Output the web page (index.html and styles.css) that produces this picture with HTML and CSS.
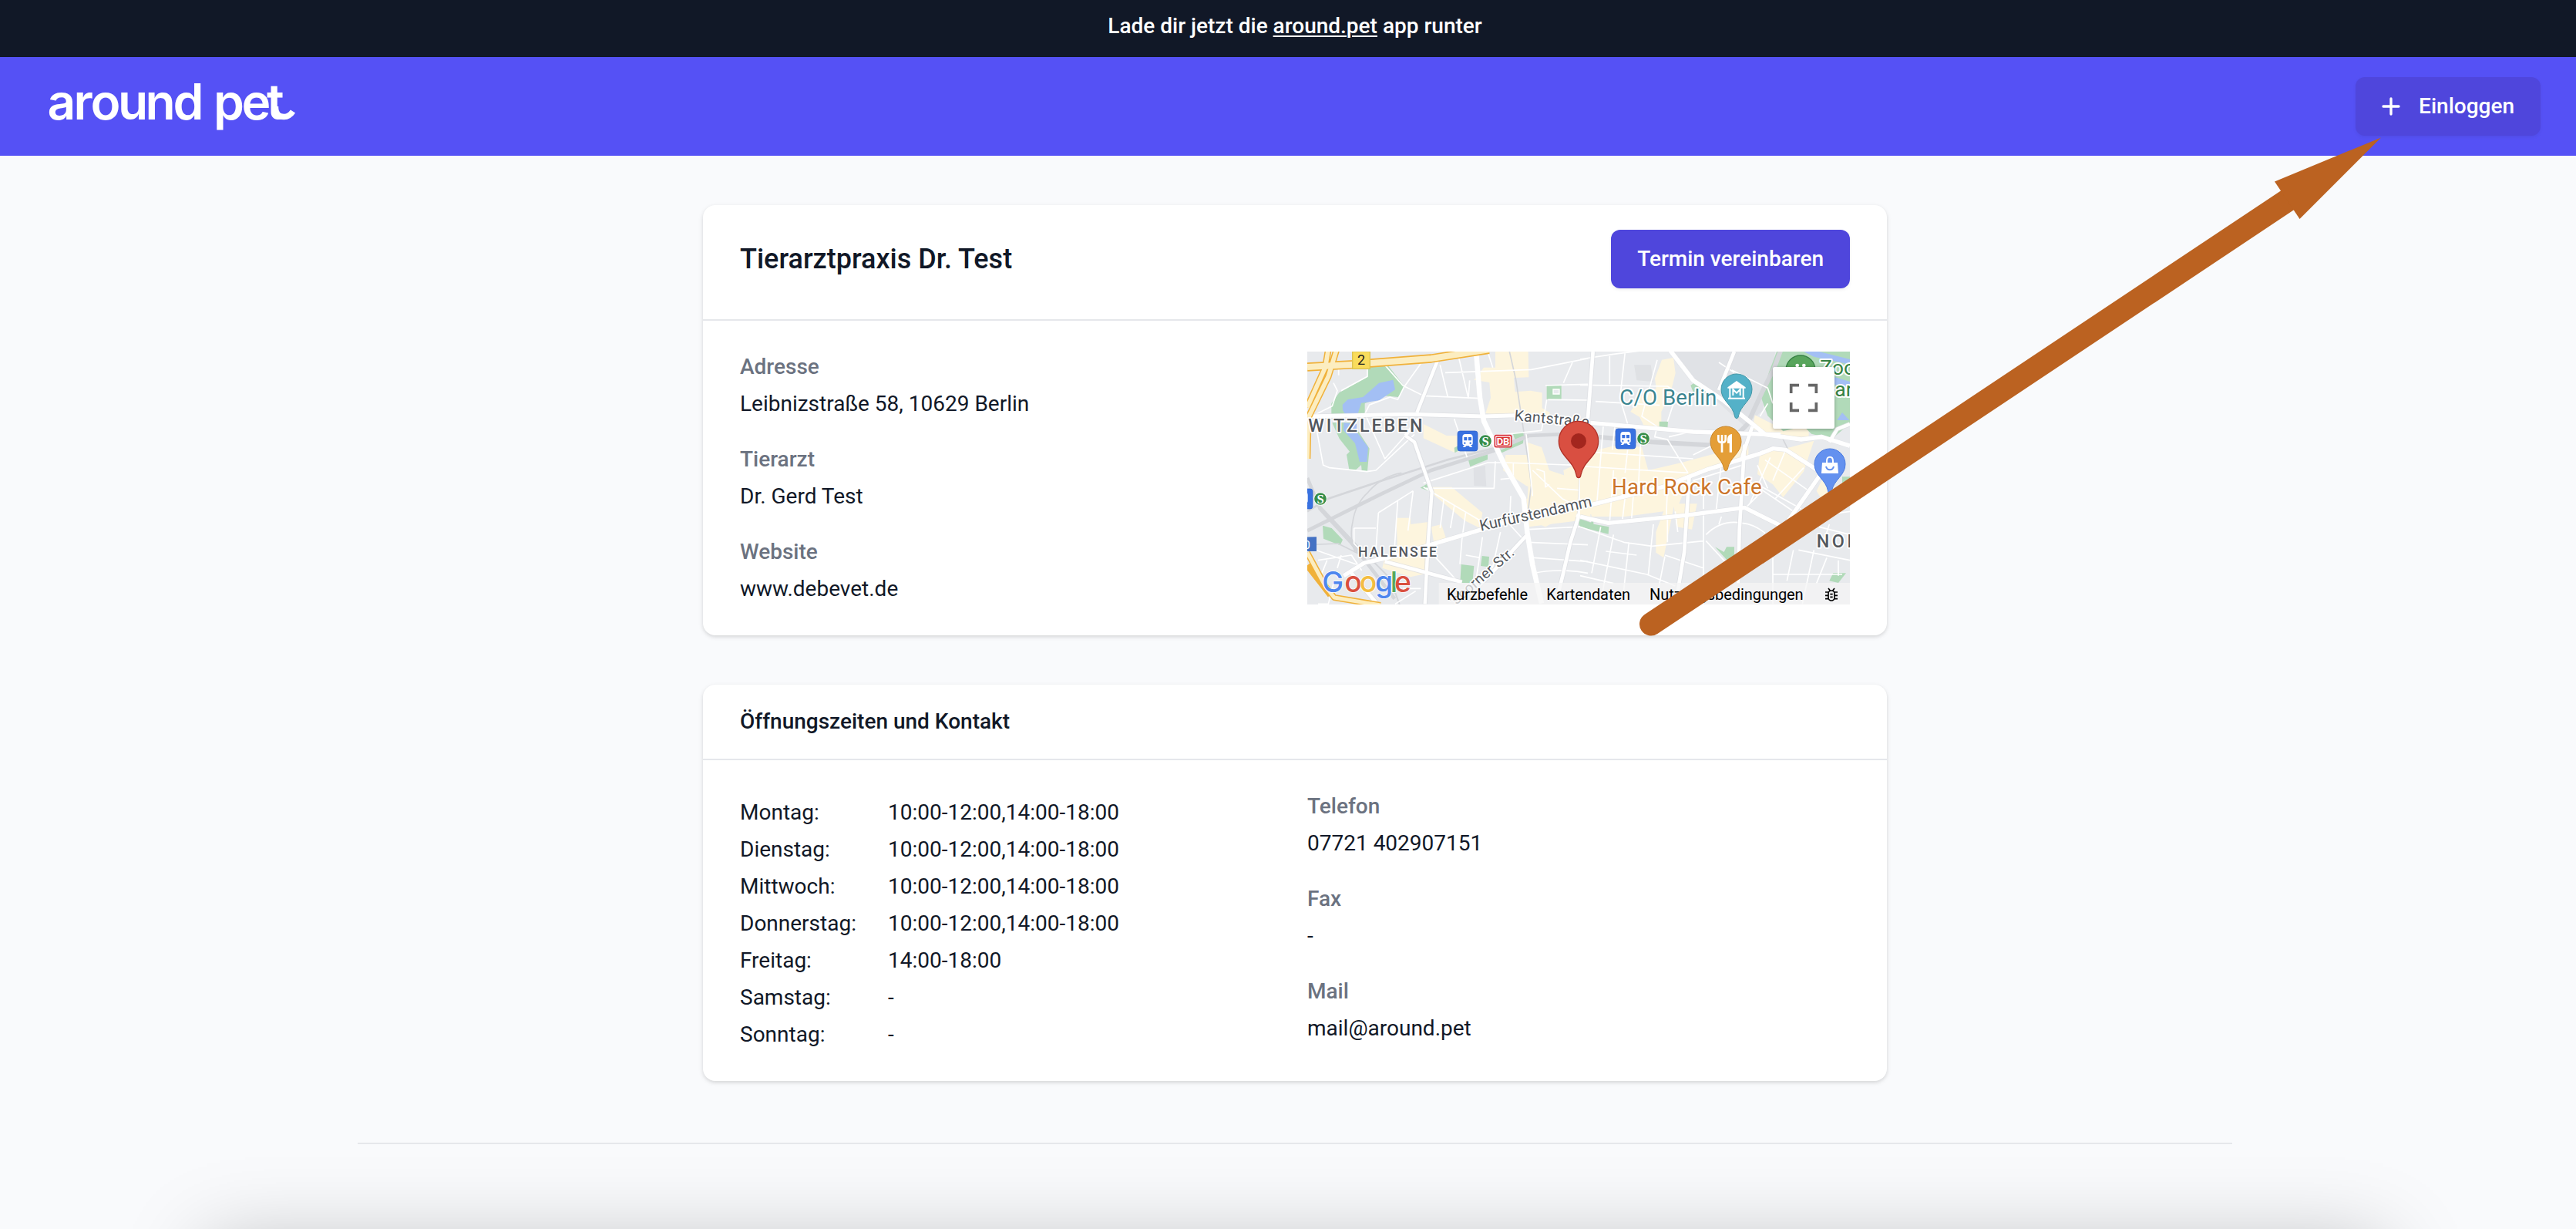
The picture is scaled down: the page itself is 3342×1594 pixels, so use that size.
FILE: index.html
```html
<!DOCTYPE html>
<html lang="de">
<head>
<meta charset="utf-8">
<title>Tierarztpraxis Dr. Test – around pet</title>
<link rel="stylesheet" href="styles.css">
</head>
<body>
<div class="page">
  <div class="banner"><p>Lade dir jetzt die <a href="#">around.pet</a> app runter</p></div>
  <header class="nav">
    <svg class="logo" viewBox="0 0 330 80" role="img" aria-label="around pet">
      <text class="logo-text" x="-2.5 31.500 53.5 89 124.5 160.5 196 213 249.5 282" y="57">around pet</text>
      <path d="M293.500 40v2c0 8 4 11.500 11 11.500 5 0 8.500-2.500 11.500-7" fill="none" stroke="#fff" stroke-width="7.500"/>
    </svg>
    <button class="btn btn-login">
      <svg class="plus" viewBox="0 0 24 24"><path d="M12 6v12M6 12h12" fill="none" stroke="#fff" stroke-width="2" stroke-linecap="round"/></svg>
      Einloggen
    </button>
  </header>

  <main class="content">
    <section class="card">
      <div class="card-head card-head-main">
        <h1>Tierarztpraxis Dr. Test</h1>
        <button class="btn">Termin vereinbaren</button>
      </div>
      <div class="card-body">
        <dl class="facts">
          <div><dt>Adresse</dt><dd>Leibnizstraße 58, 10629 Berlin</dd></div>
          <div><dt>Tierarzt</dt><dd>Dr. Gerd Test</dd></div>
          <div><dt>Website</dt><dd>www.debevet.de</dd></div>
        </dl>
        <svg class="map" viewBox="18 18 2112 984" preserveAspectRatio="none">
          <defs>
            <g id="train">
              <rect width="78" height="78" rx="10" fill="#3871e0" stroke="#2a5fc9" stroke-width="2"/>
              <path d="M30 12h18q11 0 11 12v23q0 8-8 8l7 8H48l-4-5H34l-4 5H20l7-8q-8 0-8-8V24q0-12 11-12z" fill="#fff"/>
              <path d="M25 24h12v13H25zM42 24h12v13H42z" fill="#3871e0"/>
              <circle cx="28" cy="47" r="3.500" fill="#3871e0"/><circle cx="50" cy="47" r="3.500" fill="#3871e0"/>
            </g>
            <g id="sbahn">
              <circle r="26" fill="#fff"/><circle r="23.500" fill="#388e4b"/>
              <text class="s-letter" x="0" y="17" text-anchor="middle">S</text>
            </g>
            <path id="pin" d="M0 113C-4 113-6 110-7 105-15 60-60 45-60 0A60 60 0 0 1 60 0C60 45 15 60 7 105 6 110 4 113 0 113Z"/>
          </defs>
          <rect x="18" y="18" width="2112" height="984" fill="#e8eaed"/>

          <!-- western half -->
          <g class="built">
            <path d="M705 80l45 0 0-62h128l2 100-58 2 5 55 60-5 45 8 0 60 30 18-5 20-70 4-175-22 20-60-5-60-60-10z"/>
            <path d="M470 300l90 45 45 0 30 50-45 15-120-55zM500 545h80l120 100-10 60-60-30-120-100zM365 665h55v25l75-10-5 200-70 15-110-35 10-40 50 0z"/>
            <path d="M790 420h90l-10-50 60 20 30 90 120 40-60 80-150-60-90-60zM880 500l80 40 115 90-130 70-75-30zM1015 480l100-50v200h-80z"/>
            <path d="M500 700l40-10 20 60-50 5zM870 590l250-10v90l-240 30z"/>
          </g>
          <g class="park">
            <path d="M252 65h75l70 90-25 40-55-5-75 30 0 45-130 5 0-50 30-42 110-62zM115 295h80l65 100-8 88-22-2-2-22-22 20-25-2-10-58 12-12-40-50z"/>
            <path d="M950 150h57v53h-57zM645 440l75-22 0 20-68 28zM590 392l30-15 0 20-28 15zM818 335l45-5-5 45-90 40 0-12 62-30zM458 548l25-15 10 28zM78 695l35 10 43 45-10 22-65-26zM617 846l50 6-6 66h-48zM698 813l28 3-3 40-30-4zM1072 670h60v40l-55-15z"/>
          </g>
          <path class="water" d="M155 225l20-20 60-10 62-55 55-12 8 38-62 42-70 10-15 48h-45l-12-20zM160 295l50 5 0 30 45 60-5 57h-28l-18-72-45-50z"/>
          <path d="M975 165h24v18h-24z" fill="#e8eaed" stroke="#fff" stroke-width="4"/>
          <path d="M665 470l45-8 5 80-48-2z" fill="#dfe1e5"/>
          <g class="rail">
            <path d="M18 715L300 575 500 480 740 405 880 345 1110 335" stroke-width="14"/>
            <path d="M18 640L100 590 310 520 560 440 740 395 860 350" stroke-width="8"/>
            <path d="M18 510l50 120 120 130 170 220" stroke-width="14"/>
            <path d="M40 590l170 180 130 130 40 110" stroke-width="6"/>
            <path d="M205 800q-25-60-10-120 10-70 60-115 50-60 130-75M18 770l120-5 80 40" stroke-width="5"/>
            <path d="M805 18l25 110 50 330 10 80-15 120" stroke-width="5"/>
          </g>
          <g class="street">
            <path d="M120 140l15 30-20 60-80 40M140 80l0 30M252 65V115L150 170M320 70l70 80 80 40 220 10M470 50l-75 105-25 50-30-10-80 30-20 40M245 265l75 170 80-90M45 270l35 190 25 10 145 15 35-5 150-140"/>
            <path d="M555 100l335-12 220-43M535 70l30 125M605 30l40 170M650 130l-5 70M720 18l20 62M1050 60l-35 80M945 150l165-5M955 205l155 2M950 205l-20 120-190 20M590 280l50 150M470 530l250-80 70 0 320 12M480 550h265l5-105M820 450v60l-50 5M895 480l115 110 95 50M870 340l10 90 15 150M990 550l120 10M960 535l-15 10-5-60-30-10M430 560l-20 155M370 600l-15 220M295 645l135-85M295 645l-10 150M200 705h85M200 705v60l40 40M470 545l220 130M550 590l-15 115M590 620l-15 85M635 640l-15 110-8 95"/>
            <path d="M60 830l130-20 40 60M95 830l-20 50M150 810l-15 50M50 790l170 60M500 800l110 120M700 740l-30 200M770 720l-40 180M690 820l-55-10M810 580l-5 110 55 60M880 710l230-12M880 760l230 10M900 820l210 15M900 880q100-20 210 0M390 940l70 0M360 1000l80-50M60 1000l40 0 20-80"/>
          </g>
          <g class="road-edge"><path d="M18 270l400-8 285 8 130-4 280 30M675 18l15 180 15 90 80 170 75 130 15 140 20 120 35 150M445 255l85-215M400 345l35 25 68 195-15 200-12 235M160 890l80-50 90-20 200-60 350-105 240-50M320 835l300 80M1085 500l-8 150-35 110-30 130-15 60M870 735l-130 140-60 60M1065 655l60 20M190 880l100 120"/></g>
          <g class="road">
            <path d="M18 270l400-8 285 8 130-4 280 30" stroke-width="15"/>
            <path d="M675 18l15 180 15 90 80 170 75 130 15 140 20 120 35 150" stroke-width="20"/>
            <path d="M445 255l85-215M400 345l35 25 68 195-15 200-12 235M450 280l-50 65" stroke-width="13"/>
            <path d="M160 890l80-50 90-20 200-60 350-105 240-50" stroke-width="16"/>
            <path d="M320 835l300 80M1085 500l-8 150-35 110-30 130-15 60M870 735l-130 140-60 60M1065 655l60 20M190 880l100 120" stroke-width="14"/>
          </g>
          <g class="highway-edge">
            <path d="M18 78l180-10L500 45 725 10" stroke-width="34"/>
            <path d="M100 10L88 80 18 235M132 10L100 115 22 275 18 435" stroke-width="26"/>
            <path d="M18 800l70 130 35 45 180 30M18 850l90 115" stroke-width="24"/>
          </g>
          <g class="highway">
            <path d="M18 78l180-10L500 45 725 10" stroke-width="24"/>
            <path d="M100 10L88 80 18 235M132 10L100 115 22 275 18 435" stroke-width="17"/>
            <path d="M18 800l70 130 35 45 180 30" stroke-width="15"/>
          </g>
          <rect x="194" y="18" width="68" height="67" fill="#f9dc5c" stroke="#dcc450" stroke-width="4"/>
          <text x="213" y="70" font-size="54" fill="#222">2</text>

          <!-- eastern half -->
          <g transform="translate(1080 0)">
            <path d="M360 18h400l-50 230-70 60-100-90-110-110z" fill="#e0e2e6"/>
            <path d="M210 70l65 0 10 65-65-5z" fill="#dfe1e4"/>
            <g class="built">
              <path d="M318 50l45-8 8 60-20 80-35 70 0 60-60 10-25-50-35-20 40-60 60-30-5-40zM680 265l80 40 130 10 0 35-100 0-120-30zM700 410l120-20 90-25-40 120-80 100-40-50-60-40zM0 480l70-80 80-20 90 10 25 90 130-30 260-70 0 50-230 80-40 100 70 0-20 100-60-10-10-80-40 200-30-20 0-80 30-80-150 20-130 0z"/>
              <path d="M0 460l100 0-10 180-90 20zM920 560l45-90 40 40-60 90z"/>
            </g>
            <g class="park">
              <path d="M765 18h285v280l-70 60-80-20-30-30-80 20-60-60-25-70 30-100z"/>
              <path d="M430 150l20-15 50 50-60-10zM308 290h34l-2 28-32-5zM0 680l112 20-2 28L0 700zM525 778l35 20 10-20h30v80l-25-25zM970 910l15-30h50l-30 38zM1020 505h30v30h-30z"/>
            </g>
            <path class="water" d="M870 18h60l120 30v20l-140-30zM900 90l150 45v30l-140-45zM1000 285l20-30 28 30z"/>
            <g class="rail">
              <path d="M70 350l210 20 220 12 90-20 60-60 60-130 45-90 30-80" stroke-width="18"/>
              <path d="M780 340l30 60" stroke-width="5"/>
            </g>
            <g class="street">
              <path d="M0 48l130-20 200-25M115 35v110M175 20l-20 180 30 100M0 148l340 5 90 60M60 212l250 15M300 50l-60 220 60 40-10 40 50 10 80 130M370 200l-30 90M60 410l380 25M20 465l400 25M90 310l-25 300M135 310l-10 90M185 400l-10 90M235 380l-10 200M130 480l-15 200M180 540l-15 130M345 350l85-20M440 420l80-40M480 510l0 120M550 450l-20 180M210 540l-10 130M340 540l-5 130M440 520l190-60"/>
              <path d="M590 90l140 70 20 60M540 60l60 40M640 510l220 150M700 540l160 90M720 440l170 120M690 460l40 90M740 430l-80 180M690 580l-40 40M800 400l-50 120M870 470l-110 120M700 270l30-50"/>
              <path d="M0 700l170 60 110 15 200-20M80 700l-35 180M130 730l-50 260M190 760l-25 230M285 690l-20 200M340 660l0 100M480 650v420M490 730q60-60 140-45 50 5 90 40M550 660l-10 30M490 755l120 130M100 795l120 15M0 830l260 55 110 45M330 810l150 50M330 815l-30 150M0 890l130 30M850 790l200 40M910 790l-45 210M830 790l-25 120M750 820v180M750 885h270M960 820l-40 100M1005 830v60M900 660l150-20M930 700l120 30M970 690l-20 60M370 640l10 80"/>
            </g>
            <g class="road-edge"><path d="M340 0l100 130 120 80 160 130 140 20 80-10 110 35M40 295l400 35 280 10 60 0M50 18l-20 260M600 18l-60 150M20 620l300-75 180-70 200-60 50-20 50 5 140 90-140 200M0 660l110 25 300-30 230-30 140 70M425 500l-20 300-25 150M640 380l-20 330-5 210M670 310l-40 120M970 370l30-50 50-20"/></g>
            <g class="road">
              <path d="M340 0l100 130 120 80 160 130 140 20 80-10 110 35" stroke-width="17"/>
              <path d="M40 295l400 35 280 10 60 0" stroke-width="16"/>
              <path d="M50 18l-20 260M600 18l-60 150M425 500l-20 300-25 150M640 380l-20 330-5 210M670 310l-40 120M970 370l30-50 50-20" stroke-width="14"/>
              <path d="M20 620l300-75 180-70 200-60 50-20 50 5 140 90-140 200" stroke-width="16"/>
              <path d="M0 660l110 25 300-30 230-30 140 70" stroke-width="16"/>
            </g>
          </g>

          <!-- labels -->
          <g class="label">
            <text x="22" y="331" font-size="70" font-weight="500" textLength="445">WITZLEBEN</text>
            <text x="216" y="817" font-size="53" font-weight="500" textLength="306">HALENSEE</text>
            <text x="2000" y="781" font-size="70" font-weight="500" letter-spacing="11">NORD</text>
            <text transform="translate(823 286) rotate(5)" font-size="58" textLength="292">Kantstraße</text>
            <text transform="translate(694 716) rotate(-12.500)" font-size="60" textLength="445">Kurfürstendamm</text>
            <text transform="translate(592 1010) rotate(-41)" font-size="56" textLength="312">'sborner Str.</text>
          </g>
          <g class="poi">
            <text x="1234" y="224" font-size="83" textLength="378" fill="#3b8590">C/O Berlin</text>
            <text x="1203" y="572" font-size="83" textLength="584" fill="#cb7429">Hard Rock Cafe</text>
            <text x="2013" y="109" font-size="80" fill="#368244">Zoo</text>
            <text x="2071" y="193" font-size="80" fill="#368244">arten</text>
          </g>

          <!-- markers -->
          <use href="#train" x="603" y="327"/><use href="#sbahn" x="711" y="366"/>
          <rect x="748" y="344" width="64" height="45" rx="5" fill="#fff" stroke="#d8303a" stroke-width="5"/>
          <rect x="754" y="350" width="52" height="33" rx="2" fill="#d8302f"/>
          <text x="755" y="381" font-size="39" font-weight="700" fill="#fff" textLength="50">DB</text>
          <use href="#train" x="-39" y="552"/><use href="#sbahn" x="69" y="591"/>
          <use href="#train" x="1218" y="318"/><use href="#sbahn" x="1326" y="357"/>
          <path d="M10 740l44-1v56l-44 0z" fill="#4472c4"/>
          <text x="4" y="785" font-size="46" fill="#fff">0</text>
          <circle cx="1938" cy="90" r="57" fill="#58a55c" stroke="#368244" stroke-width="4"/>
          <circle cx="1925" cy="72" r="7" fill="#fff"/><circle cx="1951" cy="72" r="7" fill="#fff"/>
          <g transform="translate(1689 165)">
            <use href="#pin" fill="#54b1c8" stroke="#4397a6" stroke-width="3"/>
            <path d="M-33 35h66M-26 34V-6M26 34V-6" stroke="#fff" stroke-width="6"/>
            <path d="M-35-8L0-33 35-8v4h-70z" fill="#fff"/>
            <path d="M-14 24V0L0 14 14 0v24" fill="none" stroke="#fff" stroke-width="6"/>
          </g>
          <g transform="translate(1647 369)">
            <use href="#pin" fill="#e49e37" stroke="#c98629" stroke-width="3"/>
            <path d="M-29-27v18q0 12 14 12t14-12v-18M-15-27V41" fill="none" stroke="#fff" stroke-width="8"/>
            <path d="M24-30V41H14V6H6v-18q2-16 18-18z" fill="#fff"/>
          </g>
          <g transform="translate(2052 456)">
            <use href="#pin" fill="#6491ef" stroke="#4a7be0" stroke-width="3"/>
            <path d="M-30-6h60l3 42h-66z" fill="#fff"/>
            <path d="M-12-4v-8q0-16 12-16t12 16v8" fill="none" stroke="#fff" stroke-width="6"/>
            <path d="M-15 9q3 13 15 13T15 9" fill="none" stroke="#6491ef" stroke-width="6"/>
          </g>
          <path d="M1074 509c-6 0-8-5-9-12-12-58-68-72-68-131a77 77 0 0 1 154 0c0 59-56 73-68 131-1 7-3 12-9 12z" fill="#d94f41" stroke="#b13228" stroke-width="4"/>
          <circle cx="1074" cy="366" r="30" fill="#a3261e"/>

          <text class="google" x="76 163 221 282 341 357" y="954"><tspan fill="#4e86ee">G</tspan><tspan fill="#d9503f">o</tspan><tspan fill="#f3bd42">o</tspan><tspan fill="#4e86ee">g</tspan><tspan fill="#57a75c">l</tspan><tspan fill="#d9503f">e</tspan></text>

          <rect x="530" y="918" width="1600" height="84" fill="#f5f5f5" opacity=".72"/>
          <g class="legal">
            <text x="561" y="985" textLength="315">Kurzbefehle</text>
            <text x="949" y="985" textLength="326">Kartendaten</text>
            <text x="1350" y="985" textLength="599">Nutzungsbedingungen</text>
          </g>
          <g fill="none" stroke="#000" stroke-width="5">
            <rect x="2046" y="948" width="24" height="39" rx="12"/>
            <path d="M2053 962h10M2053 973h10M2034 954h12M2034 967h12M2034 980h12M2070 954h12M2070 967h12M2070 980h12M2046 939l7 9M2070 939l-7 9"/>
          </g>
          <rect class="fs-shadow" x="1830" y="78" width="240" height="240" rx="7" fill="#fff"/>
          <path d="M1901 180v-31h31M1968 149h31v31M1999 216v31h-31M1932 247h-31v-31" fill="none" stroke="#666" stroke-width="11"/>
        </svg>
      </div>
    </section>

    <section class="card">
      <div class="card-head"><h2>Öffnungszeiten und Kontakt</h2></div>
      <div class="card-body">
        <dl class="hours">
          <dt>Montag:</dt><dd>10:00-12:00,14:00-18:00</dd>
          <dt>Dienstag:</dt><dd>10:00-12:00,14:00-18:00</dd>
          <dt>Mittwoch:</dt><dd>10:00-12:00,14:00-18:00</dd>
          <dt>Donnerstag:</dt><dd>10:00-12:00,14:00-18:00</dd>
          <dt>Freitag:</dt><dd>14:00-18:00</dd>
          <dt>Samstag:</dt><dd>-</dd>
          <dt>Sonntag:</dt><dd>-</dd>
        </dl>
        <dl class="facts">
          <div><dt>Telefon</dt><dd>07721 402907151</dd></div>
          <div><dt>Fax</dt><dd>-</dd></div>
          <div><dt>Mail</dt><dd>mail@around.pet</dd></div>
        </dl>
      </div>
    </section>
  </main>
  <hr class="divider">
</div>
<div class="sheet"></div>
<svg class="arrow" viewBox="2100 160 1020 690">
  <path d="M2142 809.500L2968 259.500" stroke="#bb6221" stroke-width="30" stroke-linecap="round"/>
  <path d="M3089 178.500L2951 235.500 2983.500 284z" fill="#bb6221"/>
</svg>
</body>
</html>
```

FILE: styles.css
```css
* { box-sizing: border-box; }

html, body { height: 100%; }

body {
  margin: 0;
  overflow: hidden;
  background: #f9fafc;
  color: #111827;
  font: 400 28px/40px Roboto, "Liberation Sans", sans-serif;
}

h1, h2, p, dl, dd { margin: 0; }

/* The layout is wider than the window; its right edge is clipped. */
.page { width: 3360px; }

.banner {
  height: 74px;
  padding-top: 14px;
  background: #111827;
  color: #fff;
  font-weight: 500;
  text-align: center;
}
.banner a { color: inherit; text-underline-offset: 3px; text-decoration-thickness: 2px; }

.nav {
  display: flex;
  align-items: center;
  justify-content: space-between;
  height: 128px;
  padding: 0 64px;
  background: #5551f5;
}

.logo { width: 330px; height: 80px; overflow: visible; }
.logo-text { font: 600 64px Inter, sans-serif; fill: #fff; }

.btn {
  display: flex;
  align-items: center;
  height: 76px;
  padding: 0 34px;
  border: 0;
  border-radius: 12px;
  background: #4f46dc;
  box-shadow: 0 2px 4px rgba(0, 0, 0, .06);
  color: #fff;
  font: inherit;
  font-weight: 500;
}
.btn-login { padding-left: 26px; }
.plus { width: 40px; height: 40px; margin-right: 16px; }

.content {
  display: grid;
  gap: 64px;
  width: 1536px;
  margin: 64px auto 80px;
}

.card {
  border-radius: 16px;
  background: #fff;
  box-shadow: 0 2px 6px rgba(0, 0, 0, .1), 0 2px 4px rgba(0, 0, 0, .06);
}

.card-head { padding: 28px 48px; height: 98px; border-bottom: 2px solid #e5e7eb; }
.card-head h2 { font-size: 28px; font-weight: 500; }
.card-head-main {
  display: flex;
  justify-content: space-between;
  height: 150px;
  padding: 32px 48px 40px;
}
.card-head-main h1 { font-size: 36px; line-height: 76px; font-weight: 500; }

.card-body {
  display: grid;
  grid-template-columns: 1fr 1fr;
  gap: 32px;
  padding: 40px 48px;
}

.facts { display: grid; gap: 32px; align-content: start; }
.facts dt { color: #6b7280; font-weight: 500; }
.facts dd { margin-top: 8px; }

.hours { display: grid; grid-template-columns: 192px 1fr; }
.hours dt, .hours dd { margin-top: 8px; }

.map { display: block; width: 704px; height: 328px; font-family: Roboto, sans-serif; }
.built { fill: #fdf5de; }
.park { fill: #b1dab9; }
.water { fill: #a3bff4; }
.rail path, .street path, .road path, .road-edge path, .highway path, .highway-edge path {
  fill: none;
  stroke-linejoin: round;
}
.rail { stroke: #d4d6da; }
.street { stroke: #fff; stroke-width: 5; }
.road { stroke: #fff; }
.road-edge { stroke: #dadce0; stroke-width: 19; opacity: .7; }
.highway { stroke: #fcedc0; }
.highway-edge { stroke: #f0b13a; }
.label text { fill: #53575d; stroke: #fff; stroke-width: 10; stroke-linejoin: round; paint-order: stroke; }
.poi text { stroke: #fff; stroke-width: 12; stroke-linejoin: round; paint-order: stroke; }
.s-letter { font: 700 50px "Liberation Serif", serif; fill: #fff; }
.google { font: 500 112px Inter, sans-serif; stroke: #fff; stroke-width: 5; paint-order: stroke; }
.legal text { font-size: 60px; fill: #000; }
.fs-shadow { filter: drop-shadow(0 3px 6px rgba(0, 0, 0, .3)); }

.divider {
  width: 2432px;
  height: 2px;
  margin: 0 auto;
  border: 0;
  background: #e5e7eb;
}

/* Sheet parked below the fold; only its shadow reaches the page. */
.sheet {
  position: fixed;
  top: 1614px;
  left: 268px;
  width: 2824px;
  height: 400px;
  box-shadow: 0 0 100px rgba(0, 0, 0, .25);
}

.arrow {
  position: absolute;
  top: 160px;
  left: 2100px;
  width: 1020px;
  height: 690px;
  pointer-events: none;
}
```
